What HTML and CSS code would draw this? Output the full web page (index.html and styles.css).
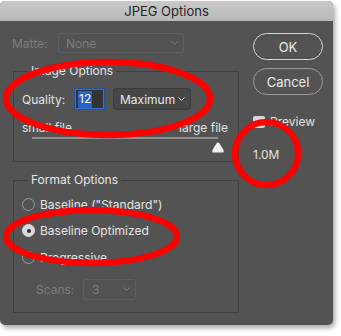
FILE: index.html
```html
<!DOCTYPE html>
<html>
<head>
<meta charset="utf-8">
<link rel="stylesheet" href="styles.css">
</head>
<body>
<div class="window">
  <div class="titlebar">JPEG Options</div>
  <div class="content">
    <div class="left">
      <div class="matte-row disabled">
        <span class="matte-label">Matte:</span>
        <div class="select matte-select"><span>None</span>
          <svg class="chev" width="7" height="4" viewBox="0 0 7 4"><path d="M0.5 0.5 L3.5 3.3 L6.5 0.5" fill="none" stroke="currentColor" stroke-width="1"/></svg>
        </div>
      </div>
      <fieldset class="group image-group">
        <legend>Image Options</legend>
        <div class="quality-row">
          <span class="q-label">Quality:</span>
          <div class="num-input"><span class="sel">12</span></div>
          <div class="select quality-select"><span>Maximum</span>
            <svg class="chev" width="7" height="4" viewBox="0 0 7 4"><path d="M0.5 0.5 L3.5 3.3 L6.5 0.5" fill="none" stroke="currentColor" stroke-width="1"/></svg>
          </div>
        </div>
        <div class="size-labels"><span>small file</span><span>large file</span></div>
        <div class="slider">
          <div class="track"></div>
          <svg class="thumb" width="12" height="11" viewBox="0 0 12 11"><path d="M6 0.5 Q6.8 0.5 7.5 1.5 L11 7 Q11.6 8 11.6 9 L11.6 10.5 L0.4 10.5 L0.4 9 Q0.4 8 1 7 L4.5 1.5 Q5.2 0.5 6 0.5 Z" fill="#f2f2f2"/></svg>
        </div>
      </fieldset>
      <fieldset class="group format-group">
        <legend>Format Options</legend>
        <div class="radio-row"><span class="radio"></span><span>Baseline (&quot;Standard&quot;)</span></div>
        <div class="radio-row"><span class="radio checked"></span><span>Baseline Optimized</span></div>
        <div class="radio-row"><span class="radio"></span><span>Progressive</span></div>
        <div class="scans-row disabled">
          <span class="scans-label">Scans:</span>
          <div class="select scans-select"><span>3</span>
            <svg class="chev" width="7" height="4" viewBox="0 0 7 4"><path d="M0.5 0.5 L3.5 3.3 L6.5 0.5" fill="none" stroke="currentColor" stroke-width="1"/></svg>
          </div>
        </div>
      </fieldset>
    </div>
    <div class="right">
      <div class="btn default">OK</div>
      <div class="btn">Cancel</div>
      <div class="check-row"><span class="checkbox"></span><span>Preview</span></div>
      <div class="filesize">1.0M</div>
    </div>
  </div>
</div>
<svg class="annotations" width="341" height="336" viewBox="0 0 341 336">
  <ellipse cx="108" cy="98.5" rx="102" ry="36.5" fill="none" stroke="#ff0000" stroke-width="6.5"/>
  <circle cx="266.5" cy="153.5" r="31.5" fill="none" stroke="#ff0000" stroke-width="6.5"/>
  <ellipse cx="91.5" cy="236.5" rx="85.5" ry="26.5" fill="none" stroke="#ff0000" stroke-width="6.5"/>
</svg>
</body>
</html>
```
FILE: styles.css
```css
html, body {
  margin: 0;
  padding: 0;
  background: #ffffff;
}
body {
  width: 341px;
  height: 336px;
  position: relative;
  overflow: hidden;
  font-family: "Inter", "Liberation Sans", sans-serif;
  font-size: 12px;
  color: #e2e2e2;
}
.window {
  margin-top: 1px;
  width: 333px;
  height: 324px;
  background: #535353;
  border-radius: 5px;
  box-shadow: 2px 3px 5px rgba(0, 0, 0, 0.35);
  overflow: hidden;
}
.titlebar {
  height: 20px;
  line-height: 20px;
  background: linear-gradient(#c9c9c9, #b8b8b8);
  color: #262626;
  text-align: center;
  font-size: 13px;
}
.content {
  display: flex;
}
.left {
  width: 241px;
  padding: 12px 0 0 12px;
}
.disabled {
  color: #7c7c7c;
}
.matte-row {
  display: flex;
  align-items: center;
  height: 20px;
}
.matte-label {
  width: 46px;
}
.select {
  display: flex;
  align-items: center;
  justify-content: space-between;
  box-sizing: border-box;
  border-radius: 3px;
}
.chev {
  display: block;
}
.matte-select {
  width: 126px;
  height: 20px;
  border: 1px solid #5f5f5f;
  padding: 0 5px 0 7px;
  color: #7c7c7c;
}
.group {
  margin: 11px 0 0 1px;
  border: 1px solid #414141;
  padding: 10px 0 0 8px;
  width: 216px;
  box-sizing: content-box;
}
.group legend {
  margin-left: 6px;
  padding: 0 3px;
  font-size: 12px;
  line-height: 14px;
  color: #e6e6e6;
}
.quality-row {
  display: flex;
  align-items: center;
  height: 22px;
}
.q-label {
  width: 53px;
}
.num-input {
  box-sizing: border-box;
  width: 29px;
  height: 20px;
  background: #333333;
  border: 1px solid #2f6fd6;
  box-shadow: 0 0 0 1px #22549f;
  padding: 1px 0 0 2px;
  display: flex;
}
.num-input .sel {
  background: #2a63c6;
  color: #ffffff;
  line-height: 16px;
  padding: 0 1px;
}
.quality-select {
  margin-left: 9px;
  width: 78px;
  height: 22px;
  background: #464646;
  border: 1px solid #3c3c3c;
  padding: 0 5px 0 6px;
  color: #e6e6e6;
}
.size-labels {
  margin-top: 11px;
  width: 206px;
  display: flex;
  justify-content: space-between;
  line-height: 14px;
}
.slider {
  position: relative;
  margin-left: 10px;
  width: 186px;
  padding-top: 2px;
  height: 26px;
  box-sizing: border-box;
}
.track {
  height: 2px;
  background: #8e8e8e;
}
.thumb {
  position: absolute;
  left: 100%;
  top: 7px;
  margin-left: -6px;
}
.format-group {
  padding-top: 4px;
  padding-bottom: 13px;
}
.radio-row {
  display: flex;
  align-items: center;
  height: 26px;
  color: #e6e6e6;
}
.radio-row + .radio-row {
  margin-top: 0.5px;
}
.radio {
  box-sizing: border-box;
  width: 13px;
  height: 13px;
  border-radius: 50%;
  border: 1px solid #9a9a9a;
  margin-right: 5px;
  display: flex;
  align-items: center;
  justify-content: center;
}
.radio.checked {
  background: #d9d9d9;
  border-color: #d9d9d9;
}
.radio.checked::after {
  content: "";
  width: 4px;
  height: 4px;
  border-radius: 50%;
  background: #2e2e2e;
}
.scans-row {
  margin-top: 9px;
  margin-left: 14px;
  display: flex;
  align-items: center;
  height: 20px;
}
.scans-label {
  width: 47px;
}
.scans-select {
  width: 53px;
  height: 21px;
  border: 1px solid #5f5f5f;
  padding: 0 5px 0 8px;
  color: #7c7c7c;
}
.right {
  padding-top: 12px;
  width: 70px;
  display: flex;
  flex-direction: column;
}
.btn {
  box-sizing: border-box;
  height: 27px;
  width: 70px;
  border-radius: 14px;
  border: 1px solid #9a9a9a;
  display: flex;
  align-items: center;
  justify-content: center;
  color: #ececec;
  font-size: 13px;
}
.btn + .btn {
  margin-top: 8px;
}
.btn.default {
  border: 1.5px solid #d6d6d6;
}
.check-row {
  margin-top: 20px;
  display: flex;
  align-items: center;
  height: 13px;
}
.checkbox {
  width: 12px;
  height: 12px;
  border-radius: 2px;
  background: #d6d6d6;
  margin-right: 5px;
}
.filesize {
  margin-top: 20px;
  line-height: 14px;
}
.annotations {
  position: absolute;
  left: 0;
  top: 0;
  pointer-events: none;
}
```
